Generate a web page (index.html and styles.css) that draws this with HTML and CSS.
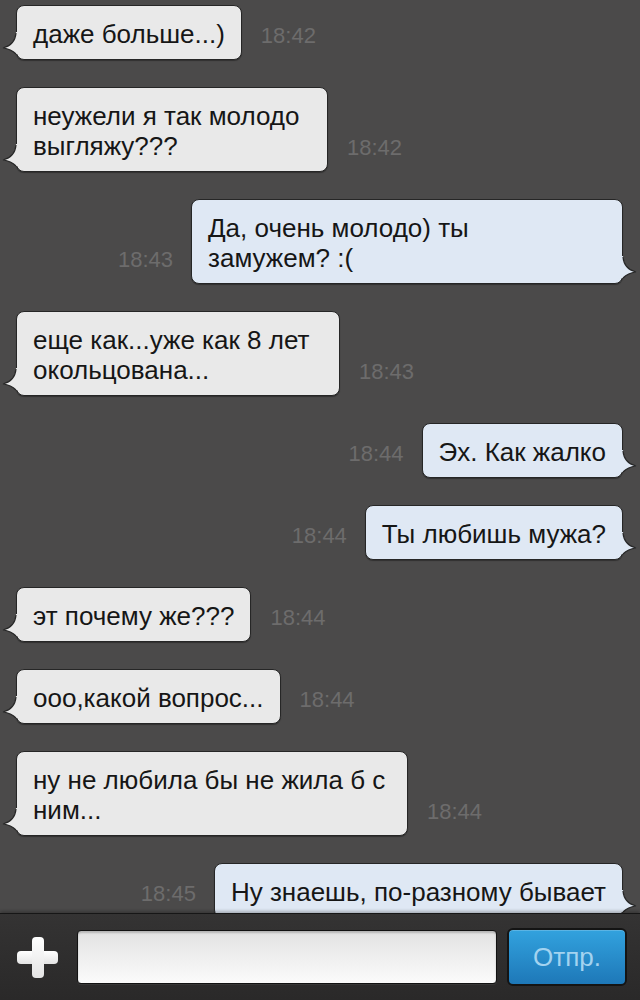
FILE: index.html
```html
<!DOCTYPE html>
<html lang="ru">
<head>
<meta charset="utf-8">
<title>Чат</title>
<link rel="stylesheet" href="styles.css">
</head>
<body>
<div class="screen">
  <div class="chat">
    <div class="row in">
      <div class="bubble">даже больше...)<svg class="tail" viewBox="0 0 18 24" width="18" height="24"><path class="tail-fill" d="M0 0 L3 0 Q4 13 16 16 Q8 17 3 22 L0 22 Z"/><path class="tail-line" d="M3 1 Q4 13 16 16 Q8 17 3 22"/></svg></div>
      <span class="time">18:42</span>
    </div>
    <div class="row in">
      <div class="bubble w312">неужели я так молодо<br>выгляжу???<svg class="tail" viewBox="0 0 18 24" width="18" height="24"><path class="tail-fill" d="M0 0 L3 0 Q4 13 16 16 Q8 17 3 22 L0 22 Z"/><path class="tail-line" d="M3 1 Q4 13 16 16 Q8 17 3 22"/></svg></div>
      <span class="time">18:42</span>
    </div>
    <div class="row out">
      <span class="time">18:43</span>
      <div class="bubble w432">Да, очень молодо) ты<br>замужем? :(<svg class="tail" viewBox="0 0 18 24" width="18" height="24"><path class="tail-fill" d="M0 0 L3 0 Q4 13 16 16 Q8 17 3 22 L0 22 Z"/><path class="tail-line" d="M3 1 Q4 13 16 16 Q8 17 3 22"/></svg></div>
    </div>
    <div class="row in">
      <div class="bubble w324">еще как...уже как 8 лет<br>окольцована...<svg class="tail" viewBox="0 0 18 24" width="18" height="24"><path class="tail-fill" d="M0 0 L3 0 Q4 13 16 16 Q8 17 3 22 L0 22 Z"/><path class="tail-line" d="M3 1 Q4 13 16 16 Q8 17 3 22"/></svg></div>
      <span class="time">18:43</span>
    </div>
    <div class="row out">
      <span class="time">18:44</span>
      <div class="bubble">Эх. Как жалко<svg class="tail" viewBox="0 0 18 24" width="18" height="24"><path class="tail-fill" d="M0 0 L3 0 Q4 13 16 16 Q8 17 3 22 L0 22 Z"/><path class="tail-line" d="M3 1 Q4 13 16 16 Q8 17 3 22"/></svg></div>
    </div>
    <div class="row out">
      <span class="time">18:44</span>
      <div class="bubble">Ты любишь мужа?<svg class="tail" viewBox="0 0 18 24" width="18" height="24"><path class="tail-fill" d="M0 0 L3 0 Q4 13 16 16 Q8 17 3 22 L0 22 Z"/><path class="tail-line" d="M3 1 Q4 13 16 16 Q8 17 3 22"/></svg></div>
    </div>
    <div class="row in">
      <div class="bubble">эт почему же???<svg class="tail" viewBox="0 0 18 24" width="18" height="24"><path class="tail-fill" d="M0 0 L3 0 Q4 13 16 16 Q8 17 3 22 L0 22 Z"/><path class="tail-line" d="M3 1 Q4 13 16 16 Q8 17 3 22"/></svg></div>
      <span class="time">18:44</span>
    </div>
    <div class="row in">
      <div class="bubble">ооо,какой вопрос...<svg class="tail" viewBox="0 0 18 24" width="18" height="24"><path class="tail-fill" d="M0 0 L3 0 Q4 13 16 16 Q8 17 3 22 L0 22 Z"/><path class="tail-line" d="M3 1 Q4 13 16 16 Q8 17 3 22"/></svg></div>
      <span class="time">18:44</span>
    </div>
    <div class="row in">
      <div class="bubble w392">ну не любила бы не жила б с<br>ним...<svg class="tail" viewBox="0 0 18 24" width="18" height="24"><path class="tail-fill" d="M0 0 L3 0 Q4 13 16 16 Q8 17 3 22 L0 22 Z"/><path class="tail-line" d="M3 1 Q4 13 16 16 Q8 17 3 22"/></svg></div>
      <span class="time">18:44</span>
    </div>
    <div class="row out">
      <span class="time">18:45</span>
      <div class="bubble">Ну знаешь, по-разному бывает<svg class="tail" viewBox="0 0 18 24" width="18" height="24"><path class="tail-fill" d="M0 0 L3 0 Q4 13 16 16 Q8 17 3 22 L0 22 Z"/><path class="tail-line" d="M3 1 Q4 13 16 16 Q8 17 3 22"/></svg></div>
    </div>
  </div>
  <div class="bar">
    <svg class="plus" viewBox="0 0 41 41" width="41" height="41">
      <defs>
        <linearGradient id="pg" x1="0" y1="0" x2="0" y2="1">
          <stop offset="0" stop-color="#ffffff"/>
          <stop offset="1" stop-color="#e4e4e4"/>
        </linearGradient>
      </defs>
      <rect x="0" y="14" width="41" height="13" rx="4" fill="url(#pg)"/>
      <rect x="15" y="0" width="12" height="41" rx="4" fill="url(#pg)"/>
    </svg>
    <div class="input"></div>
    <div class="send">Отпр.</div>
  </div>
</div>
</body>
</html>
```

FILE: styles.css
```css
* { box-sizing: border-box; }
html, body {
  margin: 0;
  padding: 0;
  background: #4a4949;
}
body {
  width: 640px;
  height: 1000px;
  overflow: hidden;
  font-family: "Liberation Sans", Arial, Helvetica, sans-serif;
}
.screen {
  width: 640px;
  height: 1000px;
  display: flex;
  flex-direction: column;
}
.chat {
  height: 913px;
  flex: none;
  overflow: hidden;
  padding-top: 5px;
  display: flex;
  flex-direction: column;
  gap: 27px;
  background: #4b4a4a;
}
.row {
  display: flex;
  align-items: flex-end;
  flex: none;
}
.row.in {
  justify-content: flex-start;
  padding-left: 16px;
}
.row.out {
  justify-content: flex-end;
  padding-right: 17px;
}
.bubble {
  position: relative;
  flex: none;
  font-size: 26px;
  line-height: 30px;
  color: #161616;
  padding: 13px 16px 10px 16px;
  border: 1px solid #262626;
  border-radius: 8px;
  white-space: nowrap;
  box-shadow: 0 1px 1px rgba(0, 0, 0, 0.35);
}
.row.in .bubble {
  background: #e9e9e9;
}
.row.out .bubble {
  background: #dfe8f4;
}
.w312 { width: 312px; }
.w432 { width: 432px; }
.w324 { width: 324px; }
.w392 { width: 392px; }
.tail {
  position: absolute;
  bottom: 3px;
  display: block;
  overflow: visible;
}
.row.out .tail {
  right: -16px;
}
.row.in .tail {
  left: -16px;
  transform: scaleX(-1);
}
.tail-fill {
  stroke: none;
}
.row.in .tail-fill { fill: #e9e9e9; }
.row.out .tail-fill { fill: #dfe8f4; }
.tail-line {
  fill: none;
  stroke: #262626;
  stroke-width: 1.2;
}
.time {
  font-size: 22px;
  line-height: 22px;
  color: #6d6c6c;
  margin-bottom: 13px;
  flex: none;
}
.row.in .time { margin-left: 19px; }
.row.out .time { margin-right: 18px; }

.bar {
  flex: 1;
  display: flex;
  align-items: center;
  padding: 0 13px 0 17px;
  background: linear-gradient(#343333, #2a2929);
  border-top: 1px solid #161616;
  box-shadow: 0 -2px 3px rgba(0, 0, 0, 0.25);
  position: relative;
}
.plus {
  flex: none;
  display: block;
  margin-right: 19px;
}
.input {
  width: 420px;
  height: 54px;
  flex: none;
  border-radius: 4px;
  border: 1px solid #121212;
  background: linear-gradient(#e2e2e2, #fbfbfb);
  box-shadow: inset 0 2px 2px rgba(0, 0, 0, 0.2), 0 1px 0 rgba(255, 255, 255, 0.06);
}
.send {
  flex: none;
  margin-left: 10px;
  width: 120px;
  height: 58px;
  border-radius: 6px;
  border: 2px solid #141414;
  background: linear-gradient(#32a2de, #1e78b8);
  color: #a3d3f0;
  font-size: 26px;
  line-height: 54px;
  text-align: center;
  box-shadow: inset 0 1px 0 rgba(255, 255, 255, 0.2);
}
```
